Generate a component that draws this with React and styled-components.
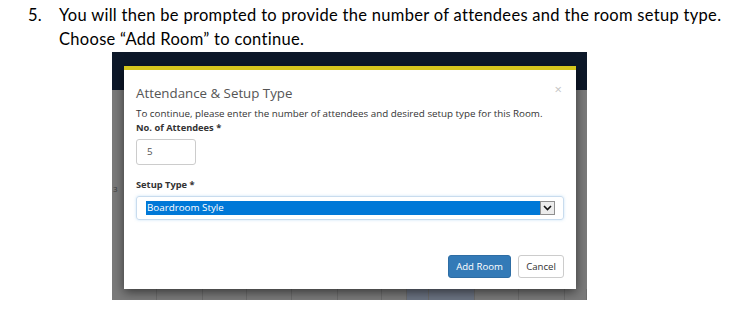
import React from 'react';
import styled, { createGlobalStyle } from 'styled-components';

const GlobalStyle = createGlobalStyle`
  body {
    margin: 0;
    background: #fff;
  }
`;

const Page = styled.div`
  width: 734px;
  height: 312px;
  padding-top: 3px;
  box-sizing: border-box;
  font-family: Lato, "Liberation Sans", sans-serif;
  color: #000;
`;

const Step = styled.div`
  display: flex;
  font-size: 16.5px;
  line-height: 24px;
  letter-spacing: 0.3px;
`;

const StepNum = styled.div`
  width: 59px;
  padding-left: 28px;
  box-sizing: border-box;
`;

const StepText = styled.div`
  width: 675px;
  white-space: nowrap;
`;

const Shot = styled.div`
  position: relative;
  margin: 1px 0 0 112px;
  width: 475px;
  height: 248px;
  display: flex;
  flex-direction: column;
  overflow: hidden;
  font-family: "Open Sans", sans-serif;
`;

const TopBar = styled.div`
  height: 38px;
  background: #0d1829;
`;

const Backdrop = styled.div`
  flex: 1;
  background: #7a7a7a;
  display: flex;
  flex-direction: column;
  justify-content: space-between;
`;

const TimeLabel = styled.div`
  margin: 93px 0 0 1px;
  font-size: 8px;
  line-height: 12px;
  color: #3a3a3a;
`;

const CalRow = styled.div`
  height: 11px;
  display: flex;
`;

const CalCell = styled.div`
  width: ${p => p.w}px;
  border-right: 1px solid #6c6c6c;
  background: ${p => (p.active ? '#6b7382' : 'transparent')};
`;

const Modal = styled.div`
  position: absolute;
  left: 12px;
  top: 14px;
  width: 452px;
  height: 223px;
  box-sizing: border-box;
  background: #fff;
  border-top: 4px solid #d6c61d;
  box-shadow: 0 3px 10px rgba(0, 0, 0, 0.55);
  padding: 0 12px;
  display: flex;
  flex-direction: column;
`;

const ModalHead = styled.div`
  margin-top: 13px;
  display: flex;
  justify-content: space-between;
  align-items: flex-start;
`;

const Title = styled.div`
  font-size: 13.3px;
  line-height: 20px;
  color: #555;
`;

const Close = styled.div`
  font-size: 13px;
  line-height: 12px;
  color: #c4c4c4;
  margin-right: 2px;
`;

const Desc = styled.div`
  margin-top: 4px;
  font-size: 9.8px;
  line-height: 14px;
  color: #333;
`;

const Label = styled.div`
  margin-top: ${p => p.mt || 0}px;
  font-size: 9.3px;
  line-height: 14px;
  font-weight: 700;
  color: #333;
`;

const NumInput = styled.div`
  margin-top: 4px;
  width: 60px;
  height: 26px;
  box-sizing: border-box;
  border: 1px solid #ccc;
  border-radius: 3px;
  padding-left: 10px;
  font-size: 9.8px;
  line-height: 24px;
  color: #555;
`;

const Select = styled.div`
  margin-top: 4px;
  height: 24px;
  box-sizing: border-box;
  border: 1px solid #c9dcee;
  border-radius: 3px;
  box-shadow: 0 0 3px rgba(102, 175, 233, 0.35);
  padding: 4px 8px 4px 9px;
  display: flex;
`;

const Highlight = styled.div`
  flex: 1;
  height: 14px;
  background: #0078d7;
  color: #fff;
  font-size: 9.8px;
  line-height: 14px;
  padding-left: 1px;
`;

const ArrowBox = styled.div`
  width: 15px;
  height: 14px;
  box-sizing: border-box;
  border: 1px solid #8f8f8f;
  background: #ececec;
  display: flex;
  align-items: center;
  justify-content: center;
`;

const Footer = styled.div`
  margin-top: 35px;
  display: flex;
  justify-content: flex-end;
  gap: 7px;
`;

const Button = styled.div`
  width: ${p => p.w}px;
  height: 23px;
  box-sizing: border-box;
  text-align: center;
  border: 1px solid ${p => (p.primary ? '#2e6da4' : '#ccc')};
  border-radius: 3px;
  background: ${p => (p.primary ? '#337ab7' : '#fff')};
  color: ${p => (p.primary ? '#fff' : '#333')};
  font-size: 9.6px;
  line-height: 21px;
`;

const cells = [
  { w: 45 }, { w: 46 }, { w: 44 }, { w: 46 }, { w: 46 }, { w: 44 },
  { w: 24 }, { w: 22, active: true }, { w: 46, active: true },
  { w: 44 }, { w: 46 }, { w: 22 },
];

export default function App() {
  return (
    <>
      <GlobalStyle />
      <Page>
        <Step>
          <StepNum>5.</StepNum>
          <StepText>
            You will then be prompted to provide the number of attendees and the room setup type.
            <br />
            Choose “Add Room” to continue.
          </StepText>
        </Step>
        <Shot>
          <TopBar />
          <Backdrop>
            <TimeLabel>3</TimeLabel>
            <CalRow>
              {cells.map((c, i) => (
                <CalCell key={i} w={c.w} active={c.active} />
              ))}
            </CalRow>
          </Backdrop>
          <Modal>
            <ModalHead>
              <Title>Attendance &amp; Setup Type</Title>
              <Close>×</Close>
            </ModalHead>
            <Desc>To continue, please enter the number of attendees and desired setup type for this Room.</Desc>
            <Label>No. of Attendees *</Label>
            <NumInput>5</NumInput>
            <Label mt={13}>Setup Type *</Label>
            <Select>
              <Highlight>Boardroom Style</Highlight>
              <ArrowBox>
                <svg width="9" height="6" viewBox="0 0 9 6">
                  <path d="M1 1 L4.5 4.5 L8 1" fill="none" stroke="#111" strokeWidth="1.6" />
                </svg>
              </ArrowBox>
            </Select>
            <Footer>
              <Button primary w={63}>Add Room</Button>
              <Button w={46}>Cancel</Button>
            </Footer>
          </Modal>
        </Shot>
      </Page>
    </>
  );
}
